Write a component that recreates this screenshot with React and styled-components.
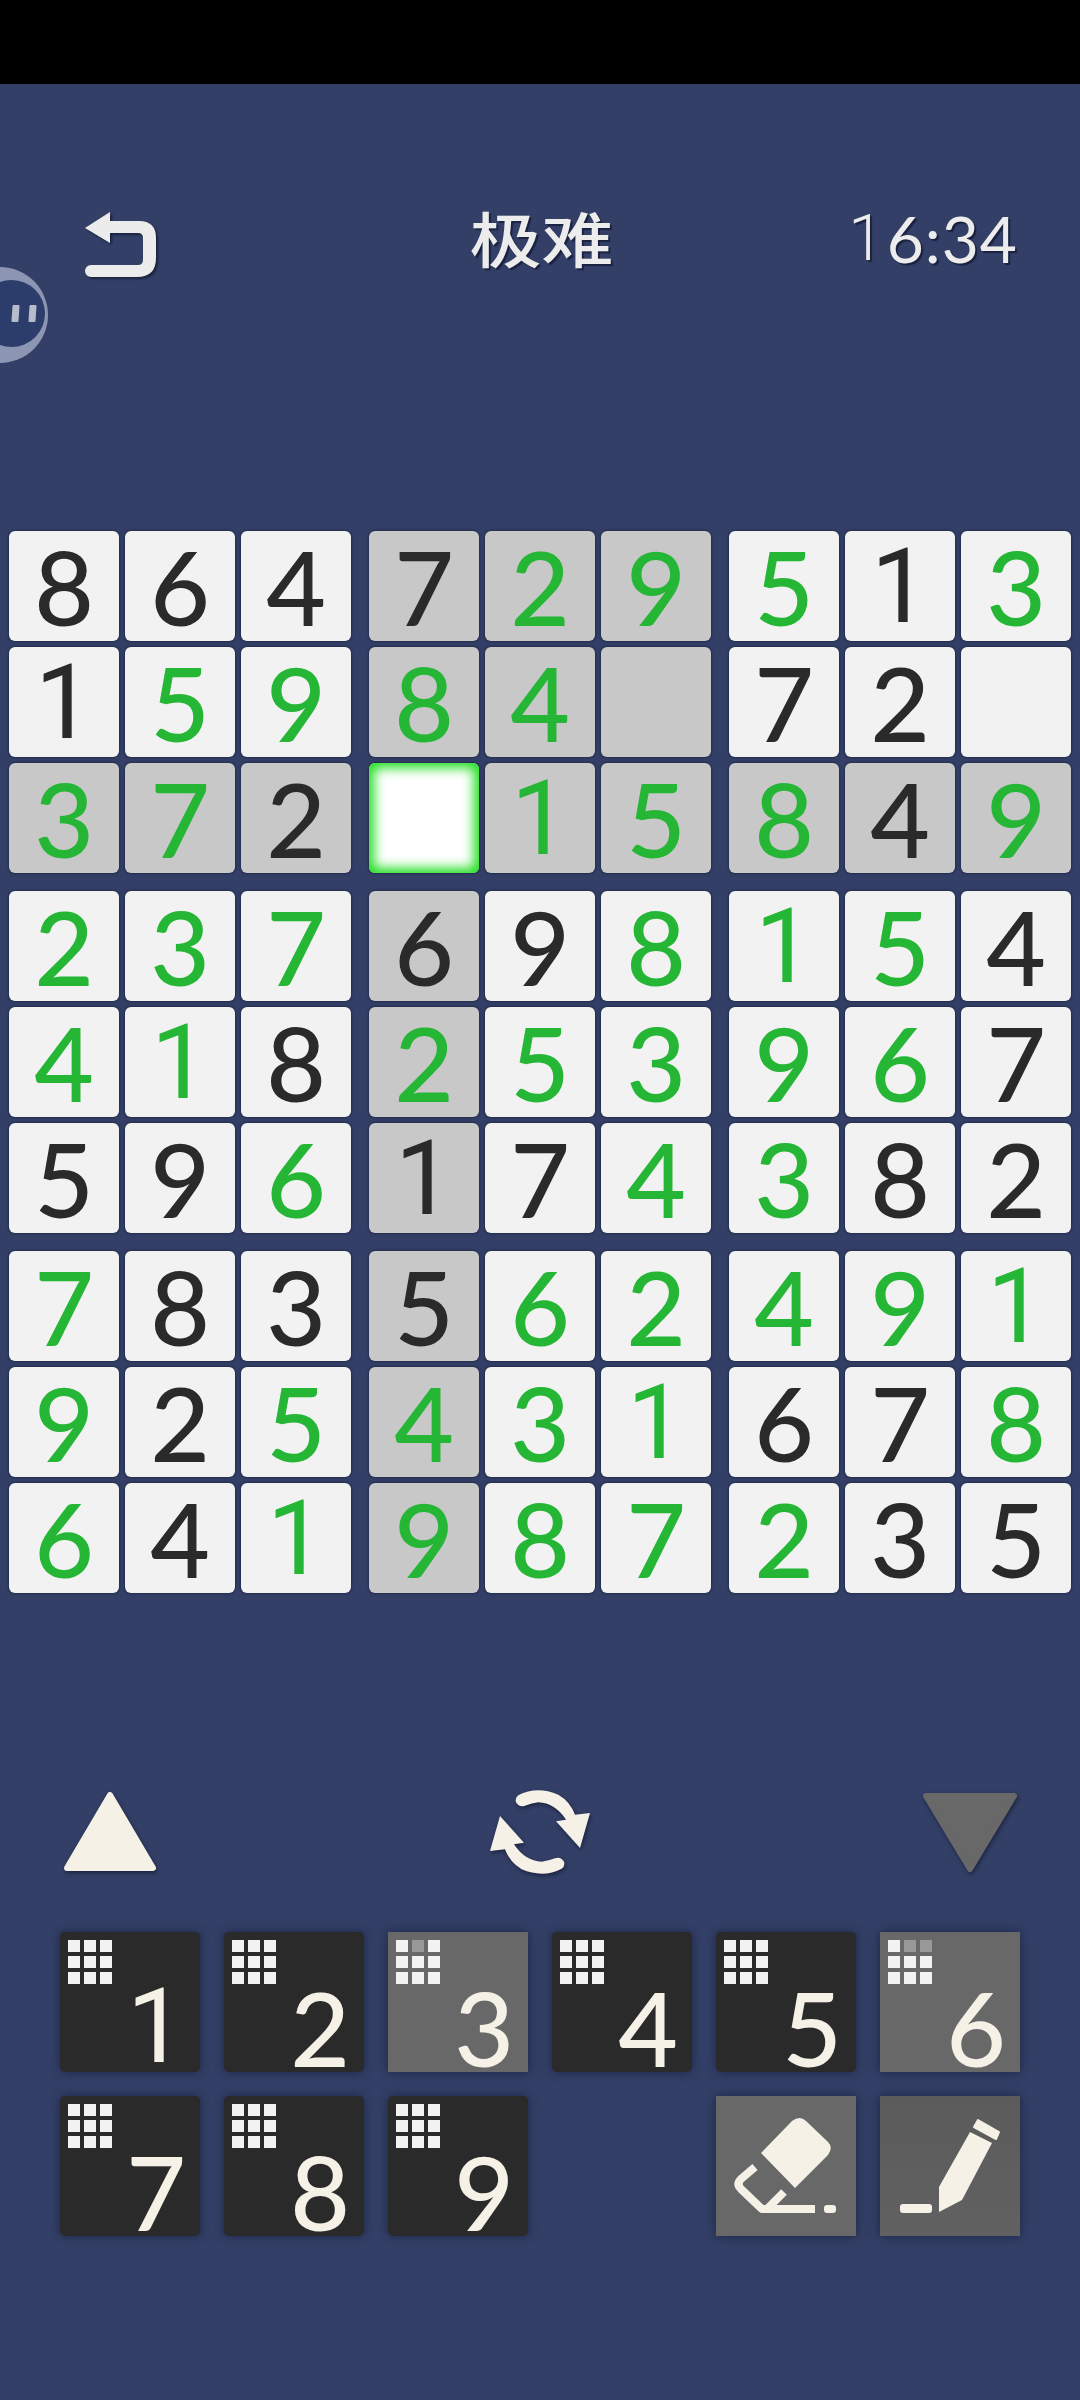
import React from "react";
import styled, { createGlobalStyle } from "styled-components";

const Global = createGlobalStyle`
  html, body { margin: 0; padding: 0; background: #333f66; }
`;

const BOARD = [
  ["8k","6k","4k","7k","2g","9g","5g","1k","3g"],
  ["1k","5g","9g","8g","4g","","7k","2k",""],
  ["3g","7g","2k","","1g","5g","8g","4k","9g"],
  ["2g","3g","7g","6k","9k","8g","1g","5g","4k"],
  ["4g","1g","8k","2g","5g","3g","9g","6g","7k"],
  ["5k","9k","6g","1k","7k","4g","3g","8k","2k"],
  ["7g","8k","3k","5k","6g","2g","4g","9g","1g"],
  ["9g","2k","5g","4g","3g","1g","6k","7k","8g"],
  ["6g","4k","1g","9g","8g","7g","2g","3k","5k"],
];
const SEL = [2, 3];
const digitFont = p => (p.$one ? "Roboto, sans-serif" : "Lato, sans-serif");
const digitWeight = p => (p.$one ? 400 : 500);

const Screen = styled.div`
  width: 1080px; height: 2400px; background: #333f66; position: relative; overflow: hidden;
  display: flex; flex-direction: column;
`;
const StatusBar = styled.div`height: 84px; background: #000; flex: none;`;
const Header = styled.div`
  height: 447px; flex: none; box-sizing: border-box; padding: 128px 62px 0 85px;
  display: grid; grid-template-columns: 1fr auto 1fr; align-items: start;
`;
const Back = styled.svg`width: 72px; height: 66px; filter: drop-shadow(2px 2px 1px #1a2240);`;
const Title = styled.div`
  font-family: "Noto Sans CJK SC", sans-serif; font-size: 72px; line-height: 60px; font-weight: 500;
  color: #ececec; text-shadow: 2px 2px 1px #1a2240; transform: translate(-10px, -5px) scaleY(0.84);
`;
const Timer = styled.div`
  justify-self: end; font-family: Lato, sans-serif; font-weight: 400; font-size: 64px; line-height: 54px;
  letter-spacing: 1px; color: #ececec; text-shadow: 2px 2px 1px #1a2240; display: flex;
`;
const TimerOne = styled.span`font-family: Roboto, sans-serif; font-weight: 300; margin-right: 2px;`;
const Board = styled.div`
  margin-left: 9px; flex: none; display: flex; flex-direction: column; gap: 18px;
`;
const Band = styled.div`display: flex; flex-direction: column; gap: 6px;`;
const Row = styled.div`display: flex; gap: 18px;`;
const Triple = styled.div`display: flex; gap: 6px;`;
const Cell = styled.div`
  width: 110px; height: 110px; border-radius: 6px;
  display: flex; align-items: center; justify-content: center;
  background: ${p => (p.$sel ? "#fff" : p.$hl ? "#c8c8c8" : "#f2f2f2")};
  box-shadow: ${p => (p.$sel
    ? "inset 0 0 12px 5px #1fdf1f, 0 0 3px #141a33"
    : "0 0 3px #141a33")};
`;
const Digit = styled.span`
  font-family: ${digitFont}; font-weight: ${digitWeight}; font-size: 103px; line-height: 1;
  color: ${p => (p.$tone === "g" ? "#26b636" : "#2a2a2a")};
`;
const Controls = styled.div`
  flex: none; margin-top: 194px; padding: 0 63px 0 64px; height: 90px;
  display: flex; justify-content: space-between; align-items: center;
`;
const Icon = styled.svg`display: block; filter: drop-shadow(1px 2px 2px #1a2240);`;
const Pad = styled.div`
  flex: none; margin: 55px 0 0 60px; width: 960px;
  display: grid; grid-template-columns: repeat(6, 140px); grid-auto-rows: 140px; gap: 24px;
`;
const Key = styled.div`
  position: relative;
  display: flex; align-items: flex-end; justify-content: flex-end;
  background: ${p => (p.$used ? "#686868" : "#2a2a2a")};
  border-radius: ${p => (p.$used ? "0" : "5px")};
  box-shadow: 0 0 10px #1c2545;
`;
const ToolKey = styled(Key)`
  background: ${p => p.$bg}; border-radius: 0;
  grid-column: ${p => p.$col};
`;
const Dots = styled.div`
  position: absolute; left: 8px; top: 8px;
  display: grid; grid-template-columns: repeat(3, 12px); grid-auto-rows: 12px; gap: 4px;
`;
const Dot = styled.i`display: block; background: ${p => (p.$dim ? "#999" : "#f2f2f2")};`;
const KeyNum = styled.span`
  width: 88px; height: 90px; text-align: center;
  font-family: ${digitFont}; font-weight: ${digitWeight}; font-size: 103px; line-height: 90px;
  color: #f5f1e6;
`;
const Ball = styled.div`
  position: absolute; left: -48px; top: 267px; width: 96px; height: 96px; border-radius: 50%;
  background: #8c95b2; display: flex; align-items: center; justify-content: flex-end;
`;
const BallInner = styled.div`
  width: 67px; height: 67px; border-radius: 50%; background: #2c3d6b; margin: 0 3px 3px 0;
  display: flex; align-items: center; justify-content: flex-end; gap: 10px; padding-right: 9px; box-sizing: border-box;
`;
const BallBar = styled.i`display: block; width: 7px; height: 17px; background: #b6bccb; border-radius: 1px; transform: skewX(-4deg);`;

const dimmed = { 3: [1], 6: [1, 2] };
const CREAM = "#f5f1e6";
const range3 = [0, 1, 2];
const ARC = "M115 47 Q170 18 235 45 Q270 65 285 105 L330 100 L300 205 L228 125 L258 120 Q225 70 175 68 Q155 70 135 78 Q118 84 108 68 Q104 54 115 47 Z";

function isHighlighted(r, c) {
  if (r === SEL[0] && c === SEL[1]) return false;
  return r === SEL[0] || c === SEL[1] || (r < 3 && c >= 3 && c < 6);
}

export default function App() {
  return (
    <Screen>
      <Global />
      <StatusBar />
      <Header>
        <Back viewBox="0 0 72 66">
          <path d="M25 0 L0 16 L25 31 L25 21 L53 21 Q58 21 58 26 L58 48 Q58 53 53 53 L6 53 A6 6 0 0 0 6 65 L52 65 Q71 65 71 46 L71 26 Q71 9 54 9 L25 9 Z" fill="#ececec"/>
        </Back>
        <Title>极难</Title>
        <Timer><TimerOne>1</TimerOne>6:34</Timer>
      </Header>
      <Ball><BallInner><BallBar /><BallBar /></BallInner></Ball>
      <Board>
        {range3.map(b => (
          <Band key={b}>
            {range3.map(rr => {
              const r = b * 3 + rr;
              return (
                <Row key={r}>
                  {range3.map(s => (
                    <Triple key={s}>
                      {range3.map(cc => {
                        const c = s * 3 + cc;
                        const v = BOARD[r][c];
                        return (
                          <Cell key={c} $sel={r === SEL[0] && c === SEL[1]} $hl={isHighlighted(r, c)}>
                            {v && <Digit $tone={v[1]} $one={v[0] === "1"}>{v[0]}</Digit>}
                          </Cell>
                        );
                      })}
                    </Triple>
                  ))}
                </Row>
              );
            })}
          </Band>
        ))}
      </Board>
      <Controls>
        <Icon width="92" height="82" viewBox="0 0 92 82">
          <path d="M46 4 L89 77 L3 77 Z" fill={CREAM} stroke={CREAM} strokeWidth="6" strokeLinejoin="round"/>
        </Icon>
        <Icon width="100" height="90" viewBox="30 22 300 270">
          <path d={ARC} fill={CREAM}/>
          <path transform="rotate(180 180 157)" d={ARC} fill={CREAM}/>
        </Icon>
        <Icon width="94" height="82" viewBox="0 0 94 82">
          <path d="M47 78 L91 5 L3 5 Z" fill="#686868" stroke="#686868" strokeWidth="6" strokeLinejoin="round"/>
        </Icon>
      </Controls>
      <Pad>
        {[1,2,3,4,5,6,7,8,9].map(n => (
          <Key key={n} $used={!!dimmed[n]}>
            <Dots>
              {Array.from({ length: 9 }, (_, i) => <Dot key={i} $dim={dimmed[n]?.includes(i)} />)}
            </Dots>
            <KeyNum $one={n === 1}>{n}</KeyNum>
          </Key>
        ))}
        <ToolKey $used $bg="#686868" $col="5">
          <svg width="140" height="140" viewBox="0 0 140 140">
            <path d="M45 57 L76 25 Q84 19 90 25 L111 45 Q118 51 112 59 L79 92 Z" fill={CREAM}/>
            <path d="M39 71 L25 83 Q20 88 25 93 L46 113 L99 113" fill="none" stroke={CREAM} strokeWidth="8" strokeLinejoin="round"/>
            <path d="M68 96 L51 113" fill="none" stroke={CREAM} strokeWidth="8"/>
            <rect x="108" y="109" width="12" height="8" rx="3" fill={CREAM}/>
          </svg>
        </ToolKey>
        <ToolKey $used $bg="linear-gradient(#5b5b5b,#616161)" $col="6">
          <svg width="140" height="140" viewBox="0 0 140 140">
            <rect x="20" y="108" width="32" height="9" rx="3" fill={CREAM}/>
            <path d="M59 116 L59 91 L90 36 L112 47 L82 104 Z" fill={CREAM}/>
            <path d="M98 24 L119 36 L116 43 L94 31 Z" fill={CREAM} stroke={CREAM} strokeWidth="2" strokeLinejoin="round"/>
          </svg>
        </ToolKey>
      </Pad>
    </Screen>
  );
}
